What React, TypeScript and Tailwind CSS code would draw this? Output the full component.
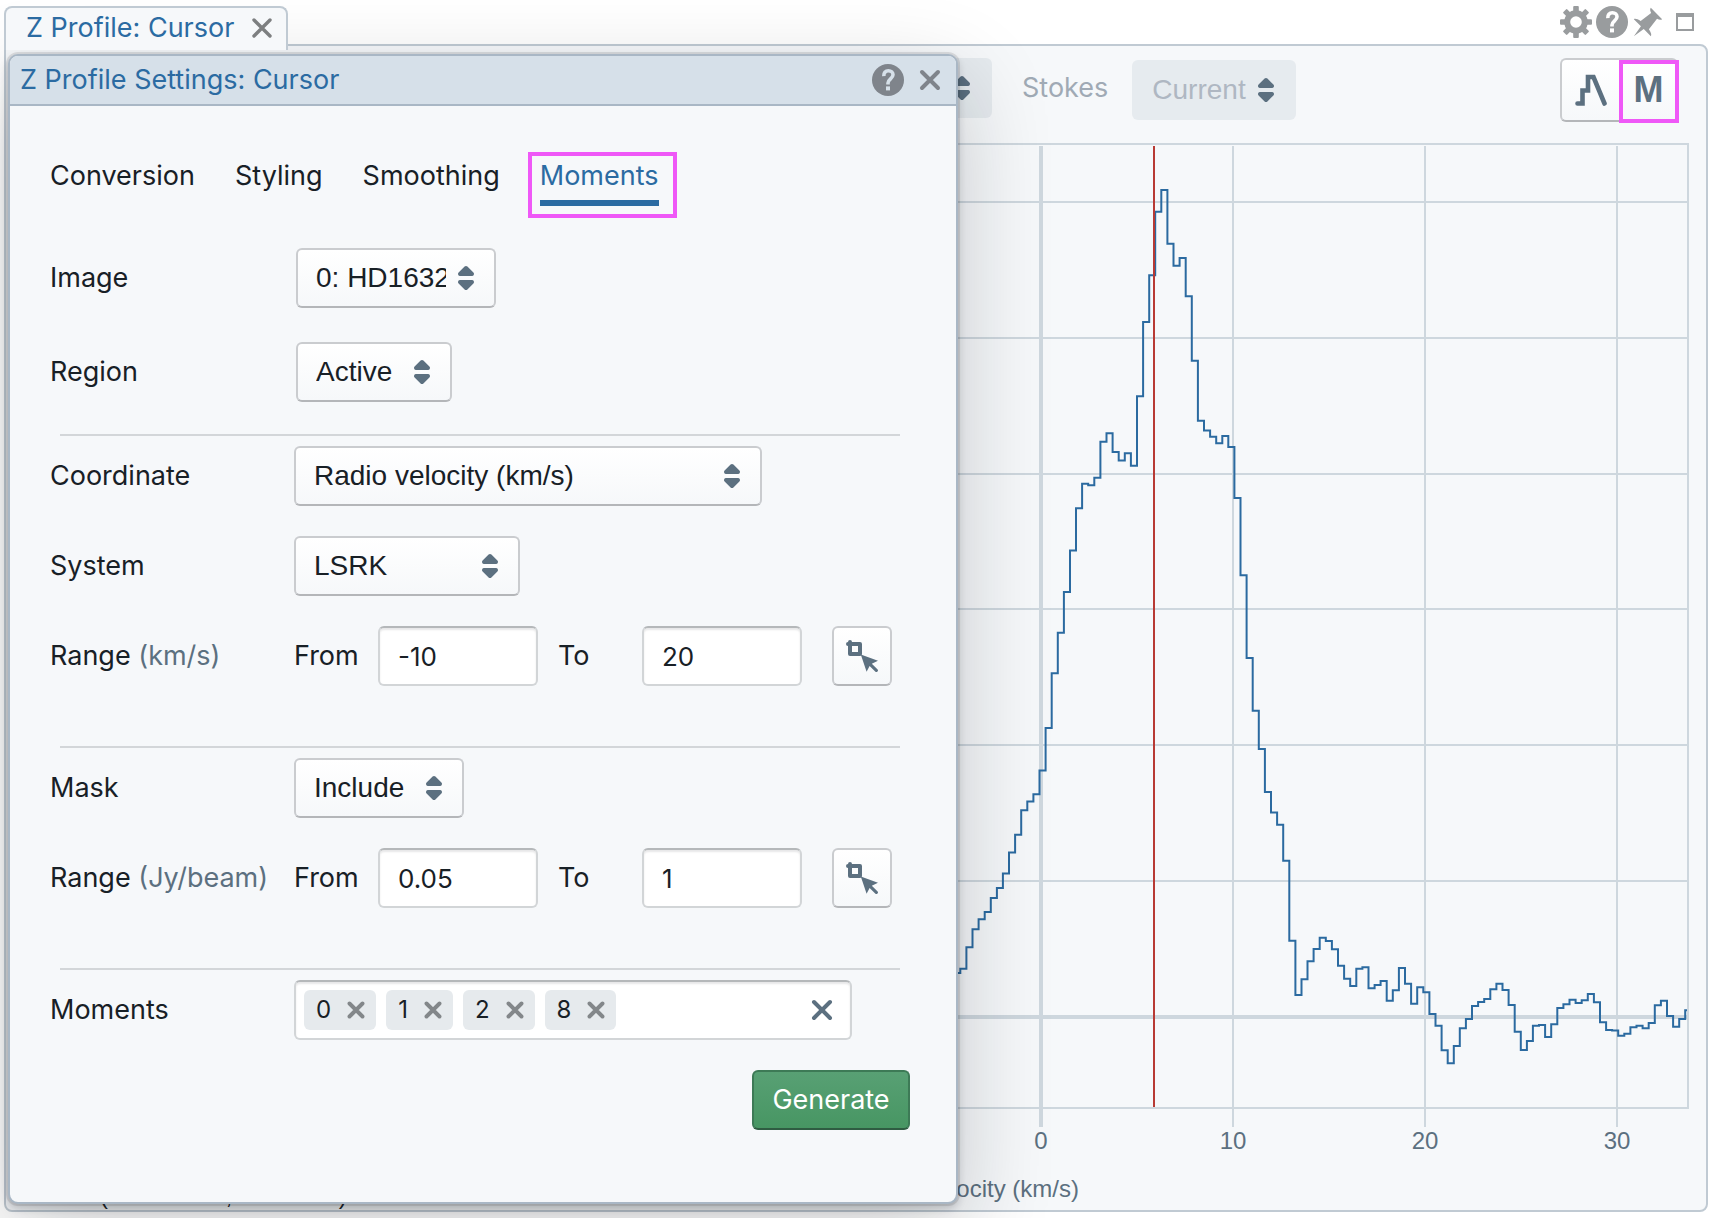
import { useState } from "react";
import type { ReactNode } from "react";
import clsx from "clsx";

const CROSS_PATHS = "M4 4l8 8M12 4l-8 8";

function Cross({ className, weight = 2 }: { className: string; weight?: number }) {
  return (
    <svg viewBox="0 0 16 16" aria-hidden="true" className={className} fill="none" stroke="currentColor" strokeWidth={weight} strokeLinecap="round">
      <path d={CROSS_PATHS} />
    </svg>
  );
}

function HelpIcon({ markColor }: { markColor: string }) {
  return (
    <svg viewBox="0 0 16 16" aria-hidden="true" className="size-8">
      <circle cx="8" cy="8" r="8" fill="currentColor" />
      <path d="M5.9 6.1C5.8 4.4 6.7 3.4 8.2 3.4c1.4 0 2.3.8 2.3 2 0 1.900-2.500 2.100-2.500 4.100v.8" fill="none" stroke={markColor} strokeWidth="1.8" />
      <rect x="7" y="11.200" width="2" height="2" fill={markColor} />
    </svg>
  );
}

function CogIcon() {
  return (
    <svg viewBox="0 0 16 16" aria-hidden="true" className="size-8" fill="currentColor">
      {[0, 45, 90, 135].map((a) => (
        <g key={a} transform={`rotate(${a} 8 8)`}>
          <rect x="6.600" y="0" width="2.800" height="4" rx=".5" />
          <rect x="6.600" y="12" width="2.800" height="4" rx=".5" />
        </g>
      ))}
      <circle cx="8" cy="8" r="4.400" fill="none" stroke="currentColor" strokeWidth="3" />
    </svg>
  );
}

function PinIcon() {
  return (
    <svg viewBox="0 0 16 16" aria-hidden="true" className="size-8" fill="currentColor">
      <path d="M9.41.92c-.51.51-.41 1.5.15 2.56L4.34 7.54C2.8 6.48 1.45 6.05.92 6.58l3.54 3.54-3.54 4.95 4.95-3.54 3.54 3.54c.53-.53.1-1.88-.96-3.42l4.06-5.22c1.06.56 2.04.66 2.55.15L9.41.92z" />
    </svg>
  );
}

function DoubleCaret() {
  return (
    <svg viewBox="0 0 16 16" aria-hidden="true" className="pointer-events-none absolute top-1/2 right-3.5 size-8 -translate-y-1/2 text-[#5c7080]" fill="currentColor">
      <path d="M5 7h6a1.003 1.003 0 00.71-1.71l-3-3C8.53 2.11 8.28 2 8 2s-.53.11-.71.29l-3 3A1.003 1.003 0 005 7zm6 2H5a1.003 1.003 0 00-.71 1.71l3 3c.18.18.43.29.71.29s.53-.11.71-.29l3-3A1.003 1.003 0 0011 9z" />
    </svg>
  );
}

function CursorSelectIcon() {
  return (
    <svg viewBox="0 0 16 16" aria-hidden="true" className="size-8 text-[#5c7080]" fill="currentColor">
      <path fillRule="evenodd" d="M2 0a1 1 0 0 1 1 1h4a1 1 0 0 1 1 1v5a1 1 0 0 1-1 1H2a1 1 0 0 1-1-1V3a1 1 0 0 1 0-2a1 1 0 0 1 1-1zM3 3v3h3V3z" />
      <path d="M7.400 7.300L16 10.400l-3.100 1.500 2.800 2.700a.8.8 0 0 1-1.100 1.200l-2.800-2.800-1.500 2.900z" />
    </svg>
  );
}

function Dropdown({ id, label, value, width, disabled }: { id: string; label?: string; value: string; width: string; disabled?: boolean }) {
  return (
    <div className={clsx("relative h-[60px] shrink-0", width)}>
      <select
        id={id}
        aria-label={label}
        disabled={disabled}
        defaultValue={value}
        className={clsx(
          "h-full w-full appearance-none rounded-md pl-5 font-['Liberation_Sans',sans-serif] text-[28px] opacity-100",
          disabled
            ? "bg-[#e6ebef] pr-11 text-[#afb7c2]"
            : "border-2 border-[#cacccf] border-b-[#b4b6b9] bg-linear-to-b from-white to-[#f6f8fa] pr-12 pl-[18px] text-[#182026]"
        )}
      >
        <option value={value}>{value}</option>
      </select>
      <DoubleCaret />
    </div>
  );
}

function FieldLabel({ htmlFor, children, unit }: { htmlFor: string; children: ReactNode; unit?: string }) {
  return (
    <label htmlFor={htmlFor} className="w-[244px] shrink-0 whitespace-nowrap">
      {children}
      {unit && <span className="text-[#5c7080]"> ({unit})</span>}
    </label>
  );
}

const INPUT_FRAME = "h-[60px] rounded-md border-2 border-[#d2d5d7] border-t-[#b5b8ba] bg-white shadow-[inset_0_2px_2px_rgba(16,22,26,0.1)]";

function RangeRow({ id, unit, from, to }: { id: string; unit: string; from: string; to: string }) {
  return (
    <div className="flex items-center">
      <FieldLabel htmlFor={`${id}-from`} unit={unit}>Range</FieldLabel>
      <label htmlFor={`${id}-from`} className="w-[84px] shrink-0">From</label>
      <input id={`${id}-from`} defaultValue={from} className={clsx(INPUT_FRAME, "w-40 px-[18px] text-[26px]")} />
      <label htmlFor={`${id}-to`} className="w-[104px] shrink-0 pl-5">To</label>
      <input id={`${id}-to`} defaultValue={to} className={clsx(INPUT_FRAME, "w-40 px-[18px] text-[26px]")} />
      <button type="button" aria-label="Select range with cursor" className="ml-[30px] grid size-[60px] place-items-center rounded-md border-2 border-[#cacccf] border-b-[#b4b6b9] bg-linear-to-b from-white to-[#f6f8fa]">
        <CursorSelectIcon />
      </button>
    </div>
  );
}

function Divider() {
  return <hr className="mr-[10px] ml-[10px] w-[840px] border-t-2 border-[#d3d6d9]" />;
}

const START_X = 960.3;
const STEP_X = 6.092;
const LEVELS = [
  968.7, 947.3, 929.3, 919.3, 912, 897.9, 888, 873.4, 852.4, 834.8, 810.3, 801.5, 794.2, 770.5, 728, 673.3, 632.7, 592.1, 550.4, 508.3,
  483.8, 485.3, 477.7, 441.7, 433.3, 452, 460.5, 453.2, 465.8, 396.3, 322, 275.3, 211.7, 190, 243.7, 265.7, 258, 296.3, 360.7, 420.7,
  430.6, 436.7, 443.2, 436, 447, 498, 575.3, 658, 710.8, 749, 791.9, 812.6, 824.8, 860.8, 940.7, 995, 979.3, 961.3, 949, 937.7,
  941, 949.3, 965.7, 978.7, 986, 968.7, 967.3, 988.3, 985, 981, 1000.7, 990.3, 968, 983.7, 1003.7, 987.3, 992.3, 1014, 1025.7, 1050.3,
  1063.3, 1046, 1028.3, 1019, 1006, 1002, 999, 989.3, 983.7, 990, 1005, 1031.7, 1050, 1041, 1025.7, 1025, 1037, 1024.3, 1008, 1004.3,
  999.7, 1003, 1000.3, 994, 1002.3, 1022.3, 1030, 1030.5, 1035.7, 1033.7, 1027.3, 1025.7, 1028.3, 1023, 1005.3, 1000.7, 1016, 1026.7, 1019, 1010.3,
];

const seriesPath = (() => {
  let d = `M950 972.900H${START_X}`;
  LEVELS.forEach((y, i) => {
    d += `V${y}H${Math.min(START_X + STEP_X * (i + 1), 1687).toFixed(1)}`;
  });
  return d;
})();

function SpectrumChart() {
  return (
    <svg viewBox="6 130 1700 1080" className="block w-full font-['Liberation_Sans',sans-serif] text-2xl" role="img" aria-label="Spectral profile">
      <g stroke="#ced7de" strokeWidth="2" fill="none">
        <path d="M60 144H1688V1108H60" />
        {[202, 338, 474, 609, 745, 881].map((y) => (
          <path key={y} d={`M60 ${y}H1688`} />
        ))}
        {[1233, 1425, 1617].map((x) => (
          <path key={x} d={`M${x} 146V1127`} />
        ))}
        <path d="M60 1017H1688M1041 146V1127" strokeWidth="4" />
      </g>
      <path d={seriesPath} fill="none" stroke="#2b6aa0" strokeWidth="2" />
      <path d="M1154 146V1107" stroke="#b83a34" strokeWidth="2" />
      <g fill="#5c7080" textAnchor="middle">
        {[0, 10, 20, 30].map((v, i) => (
          <text key={v} x={1041 + 192 * i} y="1149">{v}</text>
        ))}
      </g>
      <text x="1079" y="1197" textAnchor="end" fill="#5c7080">Radio velocity (km/s)</text>
      <text x="36" y="1204" fill="#182026">Data: (5.875 km/s, 0.712341)</text>
    </svg>
  );
}

const TABS = ["Conversion", "Styling", "Smoothing", "Moments"];

function SettingsDialog() {
  const [active, setActive] = useState("Moments");
  const [moments, setMoments] = useState(["0", "1", "2", "8"]);
  return (
    <section
      role="dialog"
      aria-label="Z Profile Settings: Cursor"
      className="absolute top-[54px] left-2 w-[950px] rounded-[10px] border-2 border-[#a9b7c5] bg-[#f6f8fa] pb-[72px] shadow-[0_0_0_2px_rgba(16,22,26,0.1),0_4px_8px_rgba(16,22,26,0.2),0_32px_92px_4px_rgba(16,22,26,0.2)]"
    >
      <header className="flex h-[50px] items-center rounded-t-lg border-b-2 border-[#a9b7c5] bg-[#d6e0e9] pr-2.5 pl-2.5">
        <h2 className="grow text-[#2b6ba2]">Z Profile Settings: Cursor</h2>
        <div className="flex items-center gap-2.5 text-[#7f848b]">
          <button type="button" aria-label="Help"><HelpIcon markColor="#d6e0e9" /></button>
          <button type="button" aria-label="Close settings"><Cross className="size-8" /></button>
        </div>
      </header>

      <div className="pr-10 pl-10">
        <div role="tablist" className="mt-10 flex gap-10">
          {TABS.map((t) => (
            <button
              key={t}
              type="button"
              role="tab"
              aria-selected={t === active}
              onClick={() => setActive(t)}
              className={clsx("relative h-[60px]", t === active && "text-[#2b6ba2] shadow-[inset_0_-6px_0_#2b6ba2]")}
            >
              {t}
              {t === "Moments" && <span className="absolute top-1.5 -right-[18px] -bottom-3 -left-3 border-4 border-[#ef58f7]" />}
            </button>
          ))}
        </div>

        <div className="mt-[42px] flex items-center">
          <FieldLabel htmlFor="image">Image</FieldLabel>
          <div className="pl-0.5"><Dropdown id="image" value="0: HD163296" width="w-[200px]" /></div>
        </div>
        <div className="mt-[34px] mb-8 flex items-center">
          <FieldLabel htmlFor="region">Region</FieldLabel>
          <div className="pl-0.5"><Dropdown id="region" value="Active" width="w-[156px]" /></div>
        </div>
        <Divider />
        <div className="mt-2.5 mb-[60px] flex flex-col gap-[30px]">
          <div className="flex items-center">
            <FieldLabel htmlFor="coordinate">Coordinate</FieldLabel>
            <Dropdown id="coordinate" value="Radio velocity (km/s)" width="w-[468px]" />
          </div>
          <div className="flex items-center">
            <FieldLabel htmlFor="system">System</FieldLabel>
            <Dropdown id="system" value="LSRK" width="w-[226px]" />
          </div>
          <RangeRow id="channel-range" unit="km/s" from="-10" to="20" />
        </div>
        <Divider />
        <div className="mt-2.5 mb-[60px] flex flex-col gap-[30px]">
          <div className="flex items-center">
            <FieldLabel htmlFor="mask">Mask</FieldLabel>
            <Dropdown id="mask" value="Include" width="w-[170px]" />
          </div>
          <RangeRow id="mask-range" unit="Jy/beam" from="0.05" to="1" />
        </div>
        <Divider />
        <div className="mt-2.5 flex items-center">
          <FieldLabel htmlFor="moments">Moments</FieldLabel>
          <div className={clsx(INPUT_FRAME, "flex w-[558px] items-center gap-2.5 pr-3 pl-2")}>
            {moments.map((m) => (
              <span key={m} className="flex h-10 shrink-0 items-center gap-3 rounded-md bg-[#e6eaed] pr-[7px] pl-3 text-2xl">
                {m}
                <button type="button" aria-label={`Remove moment ${m}`} onClick={() => setMoments(moments.filter((x) => x !== m))} className="text-[#83878a]">
                  <Cross className="size-[26px]" weight={2.4} />
                </button>
              </span>
            ))}
            <input id="moments" className="min-w-0 grow bg-transparent outline-none" />
            <button type="button" aria-label="Clear moments" onClick={() => setMoments([])} className="text-[#5c7080]">
              <Cross className="size-8" />
            </button>
          </div>
        </div>
        <div className="mt-[30px] flex justify-end pr-1.5">
          <button type="button" className="h-[60px] w-[158px] rounded-md border-2 border-[#3d7a56] border-b-[#2f5c42] bg-linear-to-b from-[#58a074] to-[#479663] text-white">
            Generate
          </button>
        </div>
      </div>
    </section>
  );
}

export default function App() {
  return (
    <main className="relative min-h-screen overflow-hidden bg-white px-1 pt-1.5 pr-2 pb-1.5 font-[Inter,sans-serif] text-[27px] leading-8 text-[#182026]">
      <div className="flex h-[38px] items-start">
        <div className="relative z-10 flex h-11 w-[284px] items-start justify-between rounded-t-lg border-2 border-b-0 border-[#c0cad3] bg-[#f6f8fa] pt-1 pr-2 pl-5">
          <h1 className="text-[#2b6ba2]">Z Profile: Cursor</h1>
          <button type="button" aria-label="Close tab" className="text-[#7d7f80]"><Cross className="size-8" weight={1.7} /></button>
        </div>
        <div className="flex grow items-center justify-end gap-1 pr-3.5 text-[#999c9e]">
          <button type="button" aria-label="Settings"><CogIcon /></button>
          <button type="button" aria-label="Help"><HelpIcon markColor="#ffffff" /></button>
          <button type="button" aria-label="Pin"><PinIcon /></button>
          <button type="button" aria-label="Maximize" className="ml-2 h-[18px] w-[18px] border-2 border-t-4 border-[#999c9e] bg-white" />
        </div>
      </div>

      <div className="rounded-lg rounded-tl-none border-2 border-[#c0cad3] bg-[#f6f8fa]">
        <div className="flex h-[84px] items-start pt-3 pr-7 pl-[846px]">
          <Dropdown id="profile-region" label="Region" value="" width="w-[140px]" disabled />
          <label htmlFor="stokes" className="pt-3.5 pl-[30px] text-[#a0aab5]">Stokes</label>
          <div className="ml-6 pt-0.5"><Dropdown id="stokes" value="Current" width="w-[164px]" disabled /></div>
          <div className="ml-auto flex">
            <button type="button" aria-label="Profile smoothing" className="grid h-16 w-[59px] place-items-center rounded-l-md border-2 border-r-0 border-[#cacccf] border-b-[#b4b6b9] bg-linear-to-b from-white to-[#f6f8fa]">
              <svg viewBox="0 0 32 32" aria-hidden="true" className="size-8" fill="none" stroke="#5c7080" strokeWidth="4.600" strokeLinecap="round">
                <path d="M2.500 29.500h5v-13h5.500v-13.500h5.500L29.500 29.500" />
              </svg>
            </button>
            <button type="button" aria-label="Moments" className="relative grid h-16 w-[59px] place-items-center rounded-r-md border-2 border-[#cacccf] bg-linear-to-b from-white to-[#f6f8fa] font-['Liberation_Sans',sans-serif] text-4xl font-bold text-[#5c7080]">
              M
              <span className="absolute top-0 -right-[3px] -bottom-[3px] -left-0.5 border-4 border-[#ef58f7]" />
            </button>
          </div>
        </div>
        <SpectrumChart />
      </div>

      <SettingsDialog />
    </main>
  );
}
